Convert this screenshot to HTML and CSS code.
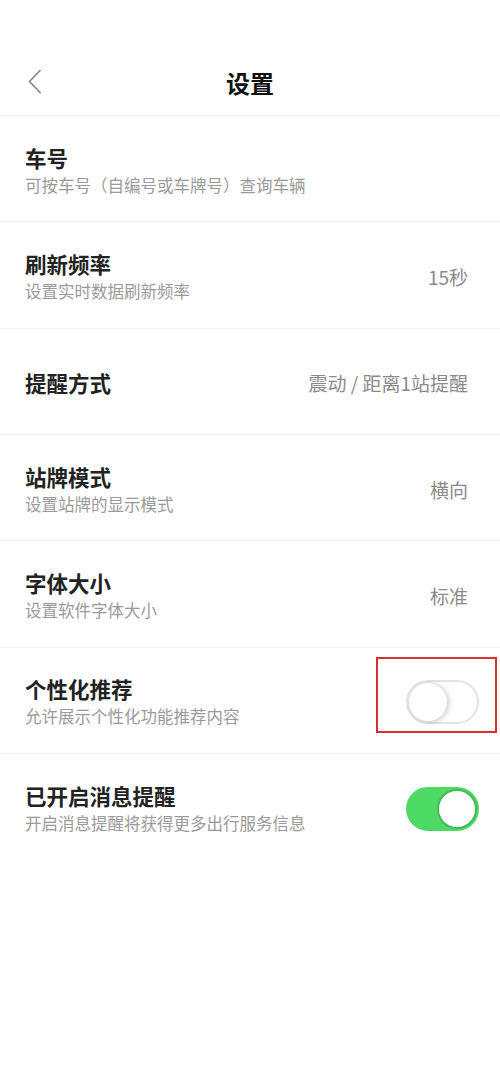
FILE: index.html
```html
<!DOCTYPE html>
<html lang="zh-CN">
<head>
<meta charset="utf-8">
<title>设置</title>
<link rel="stylesheet" href="styles.css">
</head>
<body>
<div class="page">
  <header class="header">
    <span class="back">
      <svg width="16" height="26" viewBox="0 0 16 26"><path d="M13 1.5 L2.5 12.5 L13 23.5" fill="none" stroke="#8a8a8a" stroke-width="1.8" stroke-linecap="round" stroke-linejoin="round"/></svg>
    </span>
    <h1 class="title">设置</h1>
  </header>
  <ul class="list">
    <li class="row">
      <div class="text"><div class="name">车号</div><div class="desc">可按车号（自编号或车牌号）查询车辆</div></div>
    </li>
    <li class="row">
      <div class="text"><div class="name">刷新频率</div><div class="desc">设置实时数据刷新频率</div></div>
      <span class="value">15秒</span>
    </li>
    <li class="row">
      <div class="text"><div class="name">提醒方式</div></div>
      <span class="value">震动 / 距离1站提醒</span>
    </li>
    <li class="row">
      <div class="text"><div class="name">站牌模式</div><div class="desc">设置站牌的显示模式</div></div>
      <span class="value">横向</span>
    </li>
    <li class="row">
      <div class="text"><div class="name">字体大小</div><div class="desc">设置软件字体大小</div></div>
      <span class="value">标准</span>
    </li>
    <li class="row">
      <div class="text"><div class="name">个性化推荐</div><div class="desc">允许展示个性化功能推荐内容</div></div>
      <span class="switch"><span class="knob"></span></span>
      <span class="mark"></span>
    </li>
    <li class="row last">
      <div class="text"><div class="name">已开启消息提醒</div><div class="desc">开启消息提醒将获得更多出行服务信息</div></div>
      <span class="switch on"><span class="knob"></span></span>
    </li>
  </ul>
</div>
</body>
</html>
```

FILE: styles.css
```css
html, body {
  margin: 0;
  padding: 0;
  background: #ffffff;
}
body {
  font-family: "Noto Sans CJK SC", "Noto Sans", sans-serif;
  color: #222222;
}
.page {
  width: 500px;
}
.header {
  height: 116px;
  box-sizing: border-box;
  padding-top: 50px;
  display: flex;
  align-items: center;
  justify-content: center;
  position: relative;
  border-bottom: 1px solid #f0f0f0;
}
.back {
  position: absolute;
  left: 27px;
  top: 69px;
  display: flex;
}
.title {
  margin: 0;
  font-size: 24px;
  font-weight: 700;
  color: #111111;
  line-height: 1;
}
.list {
  list-style: none;
  margin: 0;
  padding: 0;
}
.row {
  position: relative;
  height: 106.33px;
  box-sizing: border-box;
  padding: 3px 22px 0 25px;
  display: flex;
  align-items: center;
  justify-content: space-between;
  border-bottom: 1px solid #f0f0f0;
}
.row.last {
  border-bottom: none;
}
.text {
  display: flex;
  flex-direction: column;
  gap: 3px;
}
.name {
  font-size: 21.5px;
  font-weight: 700;
  line-height: 26px;
  color: #222222;
}
.desc {
  font-size: 16.5px;
  line-height: 22px;
  color: #9a9a9a;
}
.value {
  font-size: 19px;
  color: #8a8a8a;
  margin-right: 10px;
}
.switch {
  width: 73px;
  height: 44px;
  box-sizing: border-box;
  border-radius: 22px;
  border: 2px solid #e3e3e3;
  background: #ffffff;
  display: flex;
  align-items: center;
  justify-content: flex-start;
  margin-right: -1px;
}
.knob {
  width: 40px;
  height: 40px;
  box-sizing: border-box;
  border-radius: 50%;
  background: #ffffff;
  border: 1px solid #dcdcdc;
  box-shadow: 2px 1px 4px rgba(0, 0, 0, 0.15);
}
.switch.on {
  background: #4cd964;
  border-color: #4cd964;
  justify-content: flex-end;
}
.switch.on .knob {
  border: 2px solid #47b95a;
  box-shadow: none;
}
.mark {
  position: absolute;
  left: 376px;
  top: 9px;
  width: 121px;
  height: 76px;
  box-sizing: border-box;
  border: 2px solid #d9302c;
}
```
